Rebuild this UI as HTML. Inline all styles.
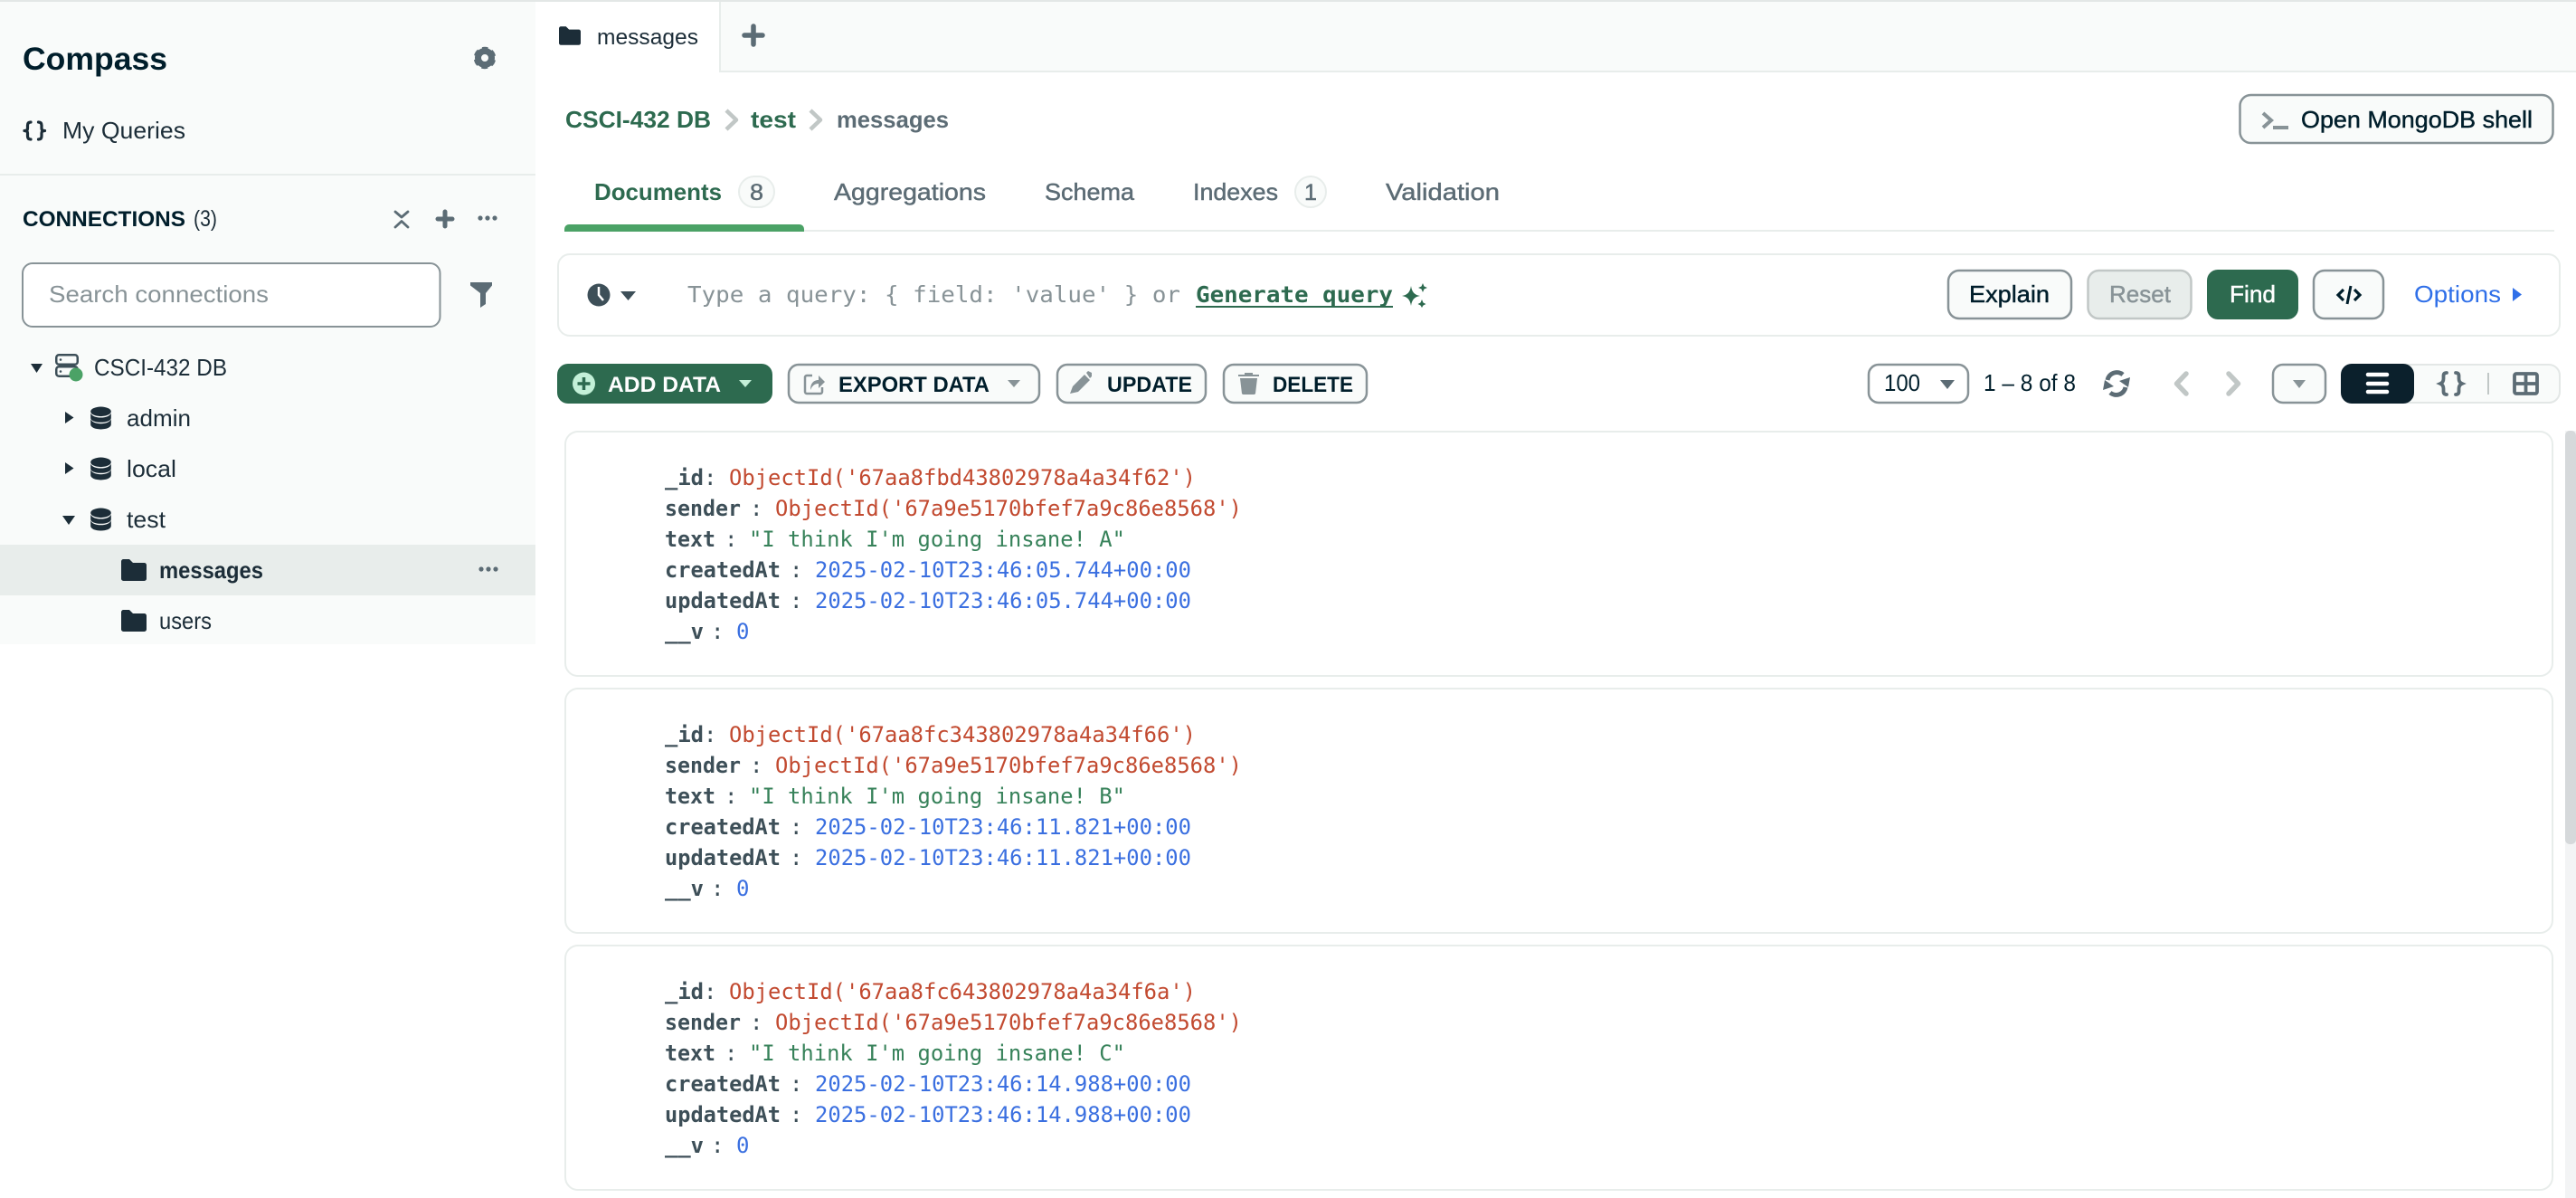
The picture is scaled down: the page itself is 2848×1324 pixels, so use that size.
<!DOCTYPE html>
<html lang="en"><head><meta charset="utf-8"><title>Compass</title>
<style>
html,body{margin:0;padding:0;background:#fff;width:2848px;height:1324px;overflow:hidden}
svg{display:block}
text{font-family:"Liberation Sans",sans-serif;font-size:26px;fill:#1c2d38}
.m{stroke:currentColor;stroke-width:.45px}
.mono{font-family:"DejaVu Sans Mono","Liberation Mono",monospace;font-size:24px}
.k{font-weight:700;fill:#3d4f58}
.c{fill:#3d4f58}
.r{fill:#c24a30}
.g{fill:#37825a}
.b{fill:#3a6fe0}
.cap{font-size:24px;font-weight:700;fill:#001e2b}
</style></head><body>
<svg xmlns="http://www.w3.org/2000/svg" width="2848" height="1324" viewBox="0 0 2848 1324">
<defs>
<symbol id="folder" viewBox="0 0 28 24"><path fill="#1c2d38" d="M0 2.5A2.5 2.5 0 0 1 2.5 0H9L13 4H25.5A2.5 2.5 0 0 1 28 6.5V21.5A2.5 2.5 0 0 1 25.5 24H2.5A2.5 2.5 0 0 1 0 21.5Z"/></symbol>
<symbol id="db" viewBox="0 0 24 26"><g fill="#1c2d38"><ellipse cx="12" cy="5.500" rx="11.800" ry="5.500"/><path d="M.2 7.500C2 11 6.500 12.500 12 12.500S22 11 23.800 7.500V13C23.800 16 18.500 18 12 18S.2 16 .2 13Z"/><path d="M.2 14.500C2 18 6.500 19.500 12 19.500S22 18 23.800 14.500V20.500C23.800 23.800 18.500 26 12 26S.2 23.800 .2 20.500Z"/></g></symbol>
<symbol id="dots" viewBox="0 0 22 6"><g fill="#5c6c75"><circle cx="3" cy="3" r="2.600"/><circle cx="11" cy="3" r="2.600"/><circle cx="19" cy="3" r="2.600"/></g></symbol>
</defs>

<!-- top line -->
<rect x="0" y="0" width="2848" height="2" fill="#e3e7e6"/>

<!-- sidebar -->
<rect x="0" y="2" width="592" height="710" fill="#f9fbfa"/>
<text x="25" y="77" textLength="160" lengthAdjust="spacingAndGlyphs" style="font-size:35px;font-weight:700;fill:#001e2b">Compass</text>
<!-- gear -->
<g transform="translate(536 64)">
<circle r="7.500" fill="none" stroke="#5c6c75" stroke-width="7"/>
<circle r="10.300" fill="none" stroke="#5c6c75" stroke-width="3.800" stroke-dasharray="6.500 4.290" stroke-dashoffset="3.250" transform="rotate(-90)"/>
</g>
<!-- my queries -->
<g fill="none" stroke="#1c2d38" stroke-width="3.200" stroke-linecap="round" stroke-linejoin="round">
<path d="M34 135q-3.500 0-3.500 3.500v3.500q0 2.500-3.500 2.500q3.500 0 3.500 2.500v3.500q0 3.500 3.500 3.500"/>
<path d="M42.500 135q3.500 0 3.500 3.500v3.500q0 2.500 3.500 2.500q-3.500 0-3.500 2.500v3.500q0 3.500-3.500 3.500"/>
</g>
<text x="69" y="153" textLength="136" lengthAdjust="spacingAndGlyphs">My Queries</text>
<rect x="0" y="192" width="592" height="2" fill="#e8edeb"/>
<text x="25" y="250" textLength="180" lengthAdjust="spacingAndGlyphs" style="font-size:24px;font-weight:700;fill:#001e2b">CONNECTIONS</text>
<text x="214" y="250" textLength="26" lengthAdjust="spacingAndGlyphs" style="font-size:25px;fill:#1c2d38">(3)</text>
<g fill="none" stroke="#5c6c75" stroke-width="2.800" stroke-linecap="round" stroke-linejoin="round">
<path d="M437 234l7 6 7-6M437 251l7-6.500 7 6.500" />
</g>
<path d="M492 234v16M484 242h16" stroke="#5c6c75" stroke-width="5" stroke-linecap="round" fill="none"/>
<use href="#dots" x="528" y="238" width="22" height="6"/>
<rect x="25" y="291" width="461.500" height="70" rx="11" fill="#fff" stroke="#889397" stroke-width="2"/>
<text x="54" y="334" textLength="243" lengthAdjust="spacingAndGlyphs" style="fill:#889397">Search connections</text>
<path d="M520 312H544V315.500L537 324V336L531 340V324L520 315.500Z" fill="#5c6c75"/>

<!-- tree -->
<path d="M34 402H47L40.500 412Z" fill="#1c2d38"/>
<g fill="none" stroke="#3d4f58" stroke-width="2.500">
<rect x="62.250" y="392.250" width="23.500" height="10.500" rx="3"/>
<rect x="62.250" y="405.250" width="23.500" height="10.500" rx="3"/>
</g>
<circle cx="67" cy="397.500" r="1.300" fill="#3d4f58"/><circle cx="67" cy="410.500" r="1.300" fill="#3d4f58"/>
<circle cx="84" cy="414" r="7.500" fill="#4ba266"/>
<text x="104" y="415" textLength="147" lengthAdjust="spacingAndGlyphs">CSCI-432 DB</text>

<path d="M72 455L81.500 461.500L72 468Z" fill="#1c2d38"/>
<use href="#db" x="100" y="449" width="23" height="26"/>
<text x="140" y="471" textLength="71" lengthAdjust="spacingAndGlyphs">admin</text>

<path d="M72 511L81.500 517.500L72 524Z" fill="#1c2d38"/>
<use href="#db" x="100" y="505" width="23" height="26"/>
<text x="140" y="527" textLength="55" lengthAdjust="spacingAndGlyphs">local</text>

<path d="M69 570H83L76 580Z" fill="#1c2d38"/>
<use href="#db" x="100" y="561" width="23" height="26"/>
<text x="140" y="583" textLength="43" lengthAdjust="spacingAndGlyphs">test</text>

<rect x="0" y="602" width="592" height="56" fill="#e8edeb"/>
<use href="#folder" x="134" y="618" width="28" height="24"/>
<text x="176" y="639" textLength="115" lengthAdjust="spacingAndGlyphs" style="font-weight:700">messages</text>
<use href="#dots" x="529" y="626" width="22" height="6"/>
<use href="#folder" x="134" y="674" width="28" height="24"/>
<text x="176" y="695" textLength="58" lengthAdjust="spacingAndGlyphs">users</text>

<!-- tab bar -->
<rect x="795" y="2" width="2053" height="76" fill="#f9fbfa"/>
<rect x="795" y="2" width="2" height="78" fill="#e8edeb"/>
<rect x="795" y="78" width="2053" height="2" fill="#e8edeb"/>
<use href="#folder" x="618" y="29" width="24" height="21"/>
<text x="660" y="49" textLength="112" lengthAdjust="spacingAndGlyphs" style="font-size:24px">messages</text>
<path d="M833 29v20M823 39h20" stroke="#5c6c75" stroke-width="5.500" stroke-linecap="round" fill="none"/>

<!-- breadcrumb -->
<text x="625" y="141" textLength="161" lengthAdjust="spacingAndGlyphs" style="font-weight:700;fill:#2d6a4f">CSCI-432 DB</text>
<path d="M803 122l11 10.500-11 10.500" fill="none" stroke="#c1c7c6" stroke-width="4.500" stroke-linejoin="round"/>
<text x="830" y="141" textLength="50" lengthAdjust="spacingAndGlyphs" style="font-weight:700;fill:#2d6a4f">test</text>
<path d="M896 122l11 10.500-11 10.500" fill="none" stroke="#c1c7c6" stroke-width="4.500" stroke-linejoin="round"/>
<text x="925" y="141" textLength="124" lengthAdjust="spacingAndGlyphs" style="font-weight:700;fill:#5c6c75">messages</text>

<!-- shell button -->
<rect x="2476.500" y="105" width="346" height="53" rx="12" fill="#f9fbfa" stroke="#889397" stroke-width="2.500"/>
<path d="M2502 125l9 8-9 8" fill="none" stroke="#889397" stroke-width="4"/>
<rect x="2513" y="139" width="17" height="4" fill="#889397"/>
<text class="m" color="#001e2b" x="2544" y="141" textLength="256" lengthAdjust="spacingAndGlyphs" style="fill:#001e2b">Open MongoDB shell</text>

<!-- tabs -->
<text x="657" y="221" textLength="141" lengthAdjust="spacingAndGlyphs" style="font-weight:700;fill:#2d6a4f">Documents</text>
<rect x="817" y="195" width="39" height="34" rx="17" fill="#f9fbfa" stroke="#e8edeb" stroke-width="2"/>
<text class="m" color="#5c6c75" x="829" y="221" textLength="15" lengthAdjust="spacingAndGlyphs" style="fill:#5c6c75;font-size:25px">8</text>
<text class="m" color="#5c6c75" x="922" y="221" textLength="168" lengthAdjust="spacingAndGlyphs" style="fill:#5c6c75">Aggregations</text>
<text class="m" color="#5c6c75" x="1155" y="221" textLength="99" lengthAdjust="spacingAndGlyphs" style="fill:#5c6c75">Schema</text>
<text class="m" color="#5c6c75" x="1319" y="221" textLength="94" lengthAdjust="spacingAndGlyphs" style="fill:#5c6c75">Indexes</text>
<rect x="1432" y="195" width="34" height="34" rx="17" fill="#f9fbfa" stroke="#e8edeb" stroke-width="2"/>
<text class="m" color="#5c6c75" x="1442" y="221" textLength="14" lengthAdjust="spacingAndGlyphs" style="fill:#5c6c75;font-size:25px">1</text>
<text class="m" color="#5c6c75" x="1532" y="221" textLength="126" lengthAdjust="spacingAndGlyphs" style="fill:#5c6c75">Validation</text>
<rect x="624" y="254" width="2200" height="2" fill="#e8edeb"/>
<path d="M624 256V253a5 5 0 0 1 5-5H884a5 5 0 0 1 5 5V256Z" fill="#4ba266"/>

<!-- query bar -->
<rect x="617" y="281" width="2213" height="90" rx="13" fill="#fff" stroke="#e8edeb" stroke-width="2"/>
<circle cx="662" cy="326" r="12.500" fill="#3d4f58"/>
<path d="M662 317v9l5 6" stroke="#fff" stroke-width="2.500" fill="none"/>
<path d="M686 322H703L694.500 332Z" fill="#3d4f58"/>
<text class="mono" x="760" y="334" textLength="545" lengthAdjust="spacingAndGlyphs" style="font-size:25px;fill:#889397">Type a query: { field: 'value' } or</text>
<text class="mono" x="1322" y="334" textLength="218" lengthAdjust="spacingAndGlyphs" style="font-size:25px;font-weight:700;fill:#2d6a4f">Generate query</text>
<rect x="1322" y="338" width="218" height="2" fill="#2d6a4f"/>
<path d="M1560 316c1 7 4 10 10 11-6 1-9 4-10 11-1-7-4-10-10-11 6-1 9-4 10-11Z" fill="#2d6a4f"/>
<path d="M1573 313l1.500 3.500 3.500 1.500-3.500 1.500-1.500 3.500-1.500-3.500-3.500-1.500 3.500-1.500ZM1572 331l1.500 3.500 3 1.500-3 1.500-1.500 2.500-1.500-2.500-3-1.500 3-1.500Z" fill="#2d6a4f"/>

<!-- query buttons -->
<rect x="2154" y="299" width="136" height="53" rx="12" fill="#f9fbfa" stroke="#889397" stroke-width="2.500"/>
<text class="m" color="#001e2b" x="2177" y="334" textLength="89" lengthAdjust="spacingAndGlyphs" style="fill:#001e2b">Explain</text>
<rect x="2308.500" y="299" width="114" height="53" rx="12" fill="#e8edeb" stroke="#c1c7c6" stroke-width="2.500"/>
<text class="m" color="#889397" x="2332" y="334" textLength="68" lengthAdjust="spacingAndGlyphs" style="fill:#889397">Reset</text>
<rect x="2440" y="298" width="101" height="55" rx="12" fill="#2d6a4f"/>
<text class="m" color="#fff" x="2465" y="334" textLength="51" lengthAdjust="spacingAndGlyphs" style="fill:#fff">Find</text>
<rect x="2558" y="299" width="77" height="53" rx="12" fill="#f9fbfa" stroke="#889397" stroke-width="2.500"/>
<path d="M2591 320l-6 6 6 6M2603 320l6 6-6 6" fill="none" stroke="#001e2b" stroke-width="3.200"/>
<path d="M2599 316l-4 20" fill="none" stroke="#001e2b" stroke-width="3"/>
<text x="2669" y="334" textLength="96" lengthAdjust="spacingAndGlyphs" style="fill:#2f6fe8">Options</text>
<path d="M2778 318L2788 325.500L2778 333Z" fill="#2f6fe8"/>

<!-- action row -->
<rect x="616" y="402" width="238" height="44" rx="12" fill="#2d6a4f"/>
<circle cx="645.500" cy="424" r="12.500" fill="#c3f0d8"/>
<path d="M645.500 417v14M638.500 424h14" stroke="#2d6a4f" stroke-width="3.500" fill="none"/>
<text x="672" y="433" textLength="125" lengthAdjust="spacingAndGlyphs" style="font-size:24px;font-weight:700;fill:#fff">ADD DATA</text>
<path d="M817 420H831L824 428Z" fill="#c3f0d8"/>

<rect x="872" y="403" width="277" height="42" rx="11" fill="#f9fbfa" stroke="#889397" stroke-width="2.500"/>
<path d="M898 415h-6a2 2 0 0 0-2 2v16a2 2 0 0 0 2 2h15a2 2 0 0 0 2-2v-5" fill="none" stroke="#889397" stroke-width="2.500"/>
<path d="M896 431c0-8 4-11 9-11v-5l7 7-7 7v-5c-4 0-7 2-9 7Z" fill="#889397"/>
<text class="cap" x="927" y="433" textLength="167" lengthAdjust="spacingAndGlyphs">EXPORT DATA</text>
<path d="M1114 420H1128L1121 428Z" fill="#889397"/>

<rect x="1169" y="403" width="164" height="42" rx="11" fill="#f9fbfa" stroke="#889397" stroke-width="2.500"/>
<path d="M1183 435l3-8 13-13 6 6-13 13ZM1201 412l2-2 4 2 0 4-2 2Z" fill="#889397"/>
<text class="cap" x="1224" y="433" textLength="94" lengthAdjust="spacingAndGlyphs">UPDATE</text>

<rect x="1353" y="403" width="158" height="42" rx="11" fill="#f9fbfa" stroke="#889397" stroke-width="2.500"/>
<path d="M1369 416v-2h7v-2h9v2h7v2ZM1371 418h19l-2 17a2 2 0 0 1-2 1h-11a2 2 0 0 1-2-1Z" fill="#889397"/>
<text class="cap" x="1407" y="433" textLength="89" lengthAdjust="spacingAndGlyphs">DELETE</text>

<!-- pagination -->
<rect x="2066" y="403" width="110" height="42" rx="11" fill="#fff" stroke="#889397" stroke-width="2.500"/>
<text x="2083" y="432" textLength="40" lengthAdjust="spacingAndGlyphs" style="fill:#001e2b">100</text>
<path d="M2145 420H2161L2153 430Z" fill="#5c6c75"/>
<text x="2193" y="432" textLength="102" lengthAdjust="spacingAndGlyphs" style="fill:#001e2b">1 – 8 of 8</text>
<g fill="none" stroke="#5c6c75" stroke-width="5">
<path d="M2330 420a10.500 10.500 0 0 1 17-6"/><path d="M2350 428a10.500 10.500 0 0 1-17 6"/>
</g>
<path d="M2343 421l12-4-2 11ZM2337 427l-12 4 2-11Z" fill="#5c6c75"/>
<path d="M2417 413l-10.500 11 10.500 11" fill="none" stroke="#c1c7c6" stroke-width="5.500" stroke-linecap="round" stroke-linejoin="round"/>
<path d="M2464 413l10.500 11-10.500 11" fill="none" stroke="#c1c7c6" stroke-width="5.500" stroke-linecap="round" stroke-linejoin="round"/>
<rect x="2513" y="403" width="58" height="42" rx="11" fill="#f9fbfa" stroke="#889397" stroke-width="2.500"/>
<path d="M2535 420H2549L2542 429Z" fill="#889397"/>

<!-- view switch -->
<rect x="2589" y="403" width="241" height="42" rx="12" fill="#f9fbfa" stroke="#e3e7e6" stroke-width="2"/>
<rect x="2588" y="402" width="81" height="44" rx="12" fill="#0b202c"/>
<g stroke="#fff" stroke-width="4.500" stroke-linecap="round"><path d="M2618 414h21M2618 424h21M2618 433h21"/></g>
<g fill="none" stroke="#5c6c75" stroke-width="3.800" stroke-linecap="round">
<path d="M2705 412q-3.500 0-3.500 3.500v3q0 4-3.500 5.500q3.500 1.500 3.500 5.500v3q0 3.500 3.500 3.500"/>
<path d="M2715 412q3.500 0 3.500 3.500v3q0 4 3.500 5.500q-3.500 1.500-3.500 5.500v3q0 3.500-3.500 3.500"/>
</g>
<rect x="2750" y="412" width="2" height="24" fill="#c1c7c6"/>
<g fill="none" stroke="#5c6c75" stroke-width="3.800"><rect x="2780" y="413" width="25" height="22" rx="2"/><path d="M2792.500 413v22M2780 424h25"/></g>

<!-- scrollbar -->
<rect x="2836" y="476" width="12" height="848" fill="#f3f4f5"/>
<rect x="2836" y="476" width="12" height="457" rx="5" fill="#d6d9db"/>

<!-- cards -->
<rect x="625" y="477" width="2197" height="270" rx="14" fill="#fff" stroke="#e8edeb" stroke-width="2"/>
<rect x="625" y="761" width="2197" height="270" rx="14" fill="#fff" stroke="#e8edeb" stroke-width="2"/>
<rect x="625" y="1045" width="2197" height="270" rx="14" fill="#fff" stroke="#e8edeb" stroke-width="2"/>

<g class="mono">
<text class="mono k" x="735" y="536" textLength="43" lengthAdjust="spacingAndGlyphs">_id</text><text class="mono c" x="778" y="536">:</text>
<text class="mono r" x="806" y="536" textLength="516" lengthAdjust="spacingAndGlyphs">ObjectId('67aa8fbd43802978a4a34f62')</text>
<text class="mono k" x="735" y="570" textLength="84" lengthAdjust="spacingAndGlyphs">sender</text><text class="mono c" x="829" y="570">:</text>
<text class="mono r" x="857" y="570" textLength="516" lengthAdjust="spacingAndGlyphs">ObjectId('67a9e5170bfef7a9c86e8568')</text>
<text class="mono k" x="735" y="604" textLength="56" lengthAdjust="spacingAndGlyphs">text</text><text class="mono c" x="801" y="604">:</text>
<text class="mono g" x="828" y="604" textLength="416" lengthAdjust="spacingAndGlyphs">"I think I'm going insane! A"</text>
<text class="mono k" x="735" y="638" textLength="128" lengthAdjust="spacingAndGlyphs">createdAt</text><text class="mono c" x="873" y="638">:</text>
<text class="mono b" x="901" y="638" textLength="416" lengthAdjust="spacingAndGlyphs">2025-02-10T23:46:05.744+00:00</text>
<text class="mono k" x="735" y="672" textLength="128" lengthAdjust="spacingAndGlyphs">updatedAt</text><text class="mono c" x="873" y="672">:</text>
<text class="mono b" x="901" y="672" textLength="416" lengthAdjust="spacingAndGlyphs">2025-02-10T23:46:05.744+00:00</text>
<text class="mono k" x="735" y="706" textLength="43" lengthAdjust="spacingAndGlyphs">__v</text><text class="mono c" x="786" y="706">:</text>
<text class="mono b" x="814" y="706">0</text>

<text class="mono k" x="735" y="820" textLength="43" lengthAdjust="spacingAndGlyphs">_id</text><text class="mono c" x="778" y="820">:</text>
<text class="mono r" x="806" y="820" textLength="516" lengthAdjust="spacingAndGlyphs">ObjectId('67aa8fc343802978a4a34f66')</text>
<text class="mono k" x="735" y="854" textLength="84" lengthAdjust="spacingAndGlyphs">sender</text><text class="mono c" x="829" y="854">:</text>
<text class="mono r" x="857" y="854" textLength="516" lengthAdjust="spacingAndGlyphs">ObjectId('67a9e5170bfef7a9c86e8568')</text>
<text class="mono k" x="735" y="888" textLength="56" lengthAdjust="spacingAndGlyphs">text</text><text class="mono c" x="801" y="888">:</text>
<text class="mono g" x="828" y="888" textLength="416" lengthAdjust="spacingAndGlyphs">"I think I'm going insane! B"</text>
<text class="mono k" x="735" y="922" textLength="128" lengthAdjust="spacingAndGlyphs">createdAt</text><text class="mono c" x="873" y="922">:</text>
<text class="mono b" x="901" y="922" textLength="416" lengthAdjust="spacingAndGlyphs">2025-02-10T23:46:11.821+00:00</text>
<text class="mono k" x="735" y="956" textLength="128" lengthAdjust="spacingAndGlyphs">updatedAt</text><text class="mono c" x="873" y="956">:</text>
<text class="mono b" x="901" y="956" textLength="416" lengthAdjust="spacingAndGlyphs">2025-02-10T23:46:11.821+00:00</text>
<text class="mono k" x="735" y="990" textLength="43" lengthAdjust="spacingAndGlyphs">__v</text><text class="mono c" x="786" y="990">:</text>
<text class="mono b" x="814" y="990">0</text>

<text class="mono k" x="735" y="1104" textLength="43" lengthAdjust="spacingAndGlyphs">_id</text><text class="mono c" x="778" y="1104">:</text>
<text class="mono r" x="806" y="1104" textLength="516" lengthAdjust="spacingAndGlyphs">ObjectId('67aa8fc643802978a4a34f6a')</text>
<text class="mono k" x="735" y="1138" textLength="84" lengthAdjust="spacingAndGlyphs">sender</text><text class="mono c" x="829" y="1138">:</text>
<text class="mono r" x="857" y="1138" textLength="516" lengthAdjust="spacingAndGlyphs">ObjectId('67a9e5170bfef7a9c86e8568')</text>
<text class="mono k" x="735" y="1172" textLength="56" lengthAdjust="spacingAndGlyphs">text</text><text class="mono c" x="801" y="1172">:</text>
<text class="mono g" x="828" y="1172" textLength="416" lengthAdjust="spacingAndGlyphs">"I think I'm going insane! C"</text>
<text class="mono k" x="735" y="1206" textLength="128" lengthAdjust="spacingAndGlyphs">createdAt</text><text class="mono c" x="873" y="1206">:</text>
<text class="mono b" x="901" y="1206" textLength="416" lengthAdjust="spacingAndGlyphs">2025-02-10T23:46:14.988+00:00</text>
<text class="mono k" x="735" y="1240" textLength="128" lengthAdjust="spacingAndGlyphs">updatedAt</text><text class="mono c" x="873" y="1240">:</text>
<text class="mono b" x="901" y="1240" textLength="416" lengthAdjust="spacingAndGlyphs">2025-02-10T23:46:14.988+00:00</text>
<text class="mono k" x="735" y="1274" textLength="43" lengthAdjust="spacingAndGlyphs">__v</text><text class="mono c" x="786" y="1274">:</text>
<text class="mono b" x="814" y="1274">0</text>
</g>
</svg>
</body></html>
